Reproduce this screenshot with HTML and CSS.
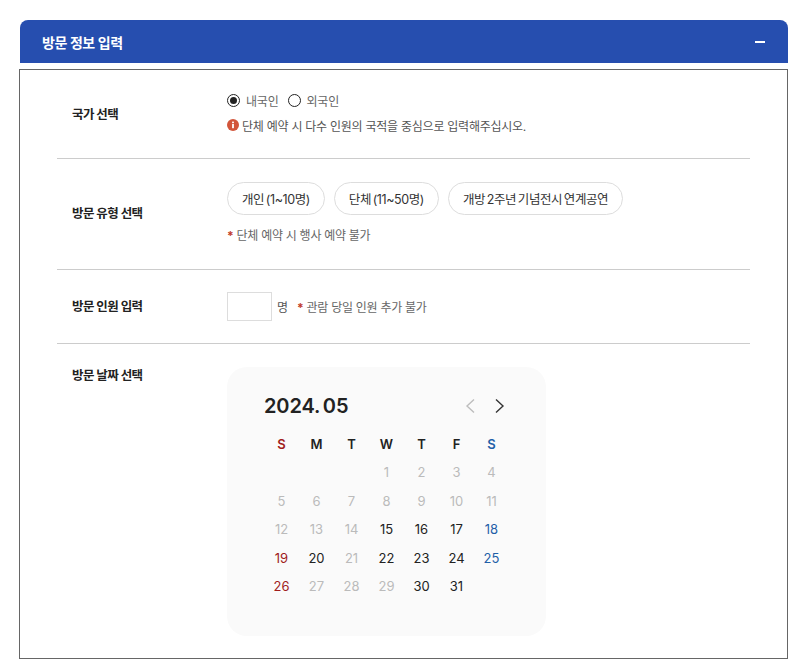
FILE: index.html
```html
<!DOCTYPE html>
<html lang="ko">
<head>
<meta charset="utf-8">
<title>방문 정보 입력</title>
<link rel="stylesheet" href="styles.css">
</head>
<body>
<section class="wrap">
  <header class="head">
    <h2 class="head-title">방문 정보 입력</h2>
    <span class="head-minus"></span>
  </header>
  <div class="panel">
    <div class="row row-country">
      <div class="label label-country">국가 선택</div>
      <div class="field">
        <div class="radios">
          <span class="radio radio-on"></span><span class="radio-text">내국인</span>
          <span class="radio"></span><span class="radio-text">외국인</span>
        </div>
        <div class="info">
          <svg class="info-icon" width="12" height="12" viewBox="0 0 12 12"><circle cx="6" cy="6" r="6" fill="#d2553a"/><rect x="5.1" y="5" width="1.8" height="4.2" fill="#fff"/><rect x="5.1" y="2.6" width="1.8" height="1.6" fill="#fff"/></svg>
          <span>단체 예약 시 다수 인원의 국적을 중심으로 입력해주십시오.</span>
        </div>
      </div>
    </div>
    <div class="row row-type">
      <div class="label label-type">방문 유형 선택</div>
      <div class="field">
        <div class="pills">
          <span class="pill">개인 (1~10명)</span>
          <span class="pill">단체 (11~50명)</span>
          <span class="pill">개방 2주년 기념전시 연계공연</span>
        </div>
        <div class="note note-type"><b class="star">*</b> 단체 예약 시 행사 예약 불가</div>
      </div>
    </div>
    <div class="row row-count">
      <div class="label">방문 인원 입력</div>
      <div class="field count">
        <span class="count-box"></span>
        <span class="count-unit">명</span>
        <span class="note"><b class="star">*</b> 관람 당일 인원 추가 불가</span>
      </div>
    </div>
    <div class="row row-date">
      <div class="label label-date">방문 날짜 선택</div>
      <div class="field">
        <div class="cal">
          <div class="cal-head">
            <span class="cal-title">2024. 05</span>
            <div class="cal-nav">
              <svg width="12" height="16" viewBox="0 0 12 16"><path d="M10 1.5 3 8l7 6.5" fill="none" stroke="#bdbdbd" stroke-width="1.4"/></svg>
              <svg width="12" height="16" viewBox="0 0 12 16"><path d="M2 1.5 9 8l-7 6.5" fill="none" stroke="#333" stroke-width="1.4"/></svg>
            </div>
          </div>
          <div class="cal-grid">
            <span class="dow sun">S</span><span class="dow">M</span><span class="dow">T</span><span class="dow">W</span><span class="dow">T</span><span class="dow">F</span><span class="dow sat">S</span>
            <span></span><span></span><span></span><span class="off">1</span><span class="off">2</span><span class="off">3</span><span class="off">4</span>
            <span class="off">5</span><span class="off">6</span><span class="off">7</span><span class="off">8</span><span class="off">9</span><span class="off">10</span><span class="off">11</span>
            <span class="off">12</span><span class="off">13</span><span class="off">14</span><span>15</span><span>16</span><span>17</span><span class="sat">18</span>
            <span class="sun">19</span><span>20</span><span class="off">21</span><span>22</span><span>23</span><span>24</span><span class="sat">25</span>
            <span class="sun">26</span><span class="off">27</span><span class="off">28</span><span class="off">29</span><span>30</span><span>31</span><span></span>
          </div>
        </div>
      </div>
    </div>
  </div>
</section>
</body>
</html>
```
FILE: styles.css
```css
* { box-sizing: border-box; }
html, body { margin: 0; padding: 0; background: #fff; }
body {
  font-family: Inter, "Noto Sans CJK KR", sans-serif;
  color: #222;
  overflow: hidden;
}
.wrap { padding: 20px 16px 0 19px; }
.head {
  margin-left: 1px;
  height: 43px;
  background: #264eaf;
  border-radius: 8px 8px 0 0;
  display: flex;
  align-items: center;
  justify-content: space-between;
  padding: 0 23px 0 22px;
}
.head-title {
  margin: 0;
  font-size: 14px;
  font-weight: 700;
  color: #fff;
  letter-spacing: -0.4px;
}
.head-minus { width: 10px; height: 2px; background: #fff; }
.panel {
  margin-top: 6px;
  border: 1px solid #666;
  height: 590px;
  padding: 0 37px;
}
.row {
  display: grid;
  grid-template-columns: 155px 1fr;
  border-bottom: 1px solid #ccc;
  padding-left: 15px;
}
.row:last-child { border-bottom: 0; }
.row-country { height: 89px; padding-top: 20px; }
.row-type { height: 111px; padding-top: 23px; }
.row-count { height: 74px; padding-top: 22px; }
.row-date { padding-top: 23px; }
.label {
  font-size: 12.5px;
  font-weight: 600;
  color: #222;
  letter-spacing: -0.6px;
  line-height: 20px;
  padding-top: 5px;
}
.label-country { padding-top: 15px; }
.label-type { padding-top: 22px; }
.label-date { padding-top: 0; margin-top: -1px; }
.radios, .info, .count { display: flex; align-items: center; }
.count { align-self: start; height: 29px; }
.radios { height: 20px; font-size: 12px; color: #666; }
.radio {
  width: 13px; height: 13px;
  border: 1px solid #222;
  border-radius: 50%;
  background: #fff;
  display: block;
  position: relative;
}
.radio-on::after {
  content: "";
  position: absolute;
  left: 2px; top: 2px;
  width: 7px; height: 7px;
  border-radius: 50%;
  background: #222;
}
.radio-text { margin: 0 9px 0 6px; letter-spacing: -0.2px; }
.info { margin-top: 5px; height: 20px; font-size: 12px; color: #555; letter-spacing: -0.25px; }
.info-icon { margin-right: 3px; flex: none; }
.pills { display: flex; gap: 9px; }
.pill {
  height: 33px;
  display: flex;
  align-items: center;
  padding: 0 14px;
  border: 1px solid #ddd;
  border-radius: 17px;
  font-size: 12.5px;
  color: #333;
  letter-spacing: -0.42px;
  word-spacing: -1.4px;
  background: #fff;
}
.note { font-size: 12px; color: #666; letter-spacing: -0.28px; }
.note-type { margin-top: 11px; line-height: 20px; }
.star { color: #c0392b; font-weight: 700; }
.count-box { width: 45px; height: 29px; border: 1px solid #ddd; background: #fff; }
.count-unit { font-size: 12px; color: #555; margin: 0 9px 0 5px; }
.cal {
  width: 319px;
  height: 269px;
  background: #fafafa;
  border-radius: 20px;
  padding: 24px 37px 0;
}
.cal-head { display: flex; justify-content: space-between; align-items: center; height: 29px; padding-right: 3px; }
.cal-title { font-size: 20px; font-weight: 600; color: #222; letter-spacing: -0.1px; word-spacing: -2px; }
.cal-nav { display: flex; gap: 18px; }
.cal-grid {
  margin-top: 10px;
  display: grid;
  grid-template-columns: repeat(7, 35px);
  grid-auto-rows: 28.4px;
  font-size: 13px;
  color: #222;
  text-align: center;
  line-height: 28.4px;
}
.dow { font-weight: 600; }
.off { color: #bbb; }
.sun { color: #a01c1c; }
.sat { color: #1f5fa8; }
```
